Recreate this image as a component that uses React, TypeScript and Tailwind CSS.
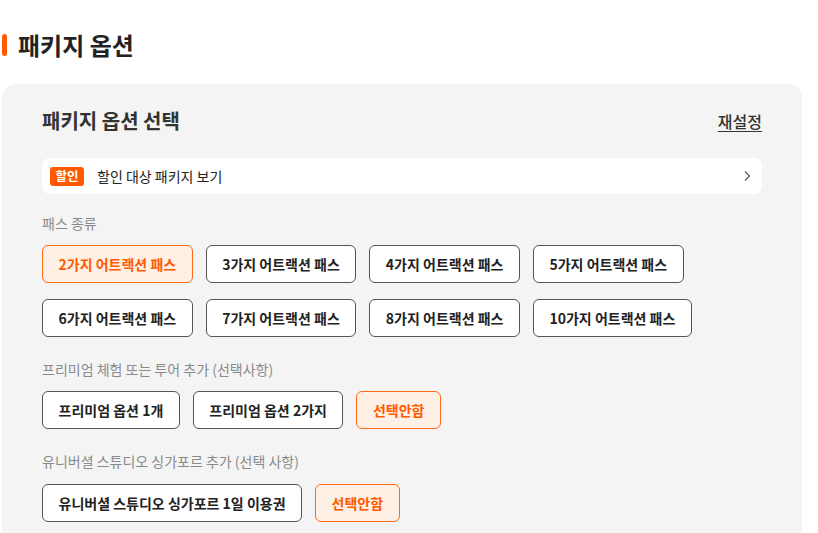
const FONT = "font-['Noto_Sans_CJK_KR','Noto_Sans',sans-serif]";

const PASSES = [
  "2가지 어트랙션 패스",
  "3가지 어트랙션 패스",
  "4가지 어트랙션 패스",
  "5가지 어트랙션 패스",
  "6가지 어트랙션 패스",
  "7가지 어트랙션 패스",
  "8가지 어트랙션 패스",
  "10가지 어트랙션 패스",
];

function OptionButton({ label, selected }: { label: string; selected?: boolean }) {
  return (
    <button
      className={`h-[38px] px-[15.5px] rounded-[6px] border text-[14px] font-bold leading-none ${
        selected
          ? "border-[#ff6a1a] bg-[#fff0e6] text-[#ff5a00]"
          : "border-[#555] bg-white text-[#222]"
      }`}
    >
      {label}
    </button>
  );
}

function SectionLabel({ children }: { children: string }) {
  return <p className="text-[14px] leading-[18px] text-[#8a8a8a]">{children}</p>;
}

export default function App() {
  return (
    <div className={`${FONT} w-[818px] pl-[2px] pt-[30px] bg-white`}>
      {/* Page title */}
      <div className="flex items-center h-[30px]">
        <span className="w-[5px] h-[22px] rounded-sm bg-[#ff5a00]" />
        <h2 className="ml-[11px] text-[24px] font-bold text-[#222]">패키지 옵션</h2>
      </div>

      {/* Panel */}
      <div className="mt-[24px] w-[800px] rounded-t-[14px] bg-[#f4f4f4] px-[40px] pt-[24px] pb-[24px]">
        <div className="flex items-center justify-between h-[26px]">
          <h3 className="text-[20px] font-bold text-[#333]">패키지 옵션 선택</h3>
          <button className="text-[16px] font-medium text-[#333] underline underline-offset-[3px]">
            재설정
          </button>
        </div>

        <div className="mt-[24px] flex items-center h-[36px] rounded-[8px] bg-white pl-[8px] pr-[10px]">
          <span className="h-[19px] px-[5.5px] flex items-center rounded-[3px] bg-[#ff5a00] text-[12.5px] font-bold text-white">
            할인
          </span>
          <span className="ml-[13px] text-[14px] text-[#222]">할인 대상 패키지 보기</span>
          <svg className="ml-auto" width="10" height="12" viewBox="0 0 10 12" fill="none">
            <path d="M3 1.5 L7.5 6 L3 10.5" stroke="#555" strokeWidth="1.2" />
          </svg>
        </div>

        <div className="mt-[20px]">
          <SectionLabel>패스 종류</SectionLabel>
          <div className="mt-[13px] flex flex-wrap gap-x-[13px] gap-y-[16px]">
            {PASSES.map((p, i) => (
              <OptionButton key={p} label={p} selected={i === 0} />
            ))}
          </div>
        </div>

        <div className="mt-[23px]">
          <SectionLabel>프리미엄 체험 또는 투어 추가 (선택사항)</SectionLabel>
          <div className="mt-[13px] flex gap-[13px]">
            <OptionButton label="프리미엄 옵션 1개" />
            <OptionButton label="프리미엄 옵션 2가지" />
            <OptionButton label="선택안함" selected />
          </div>
        </div>

        <div className="mt-[23px]">
          <SectionLabel>유니버셜 스튜디오 싱가포르 추가 (선택 사항)</SectionLabel>
          <div className="mt-[14px] flex gap-[13px]">
            <OptionButton label="유니버셜 스튜디오 싱가포르 1일 이용권" />
            <OptionButton label="선택안함" selected />
          </div>
        </div>
      </div>
    </div>
  );
}
